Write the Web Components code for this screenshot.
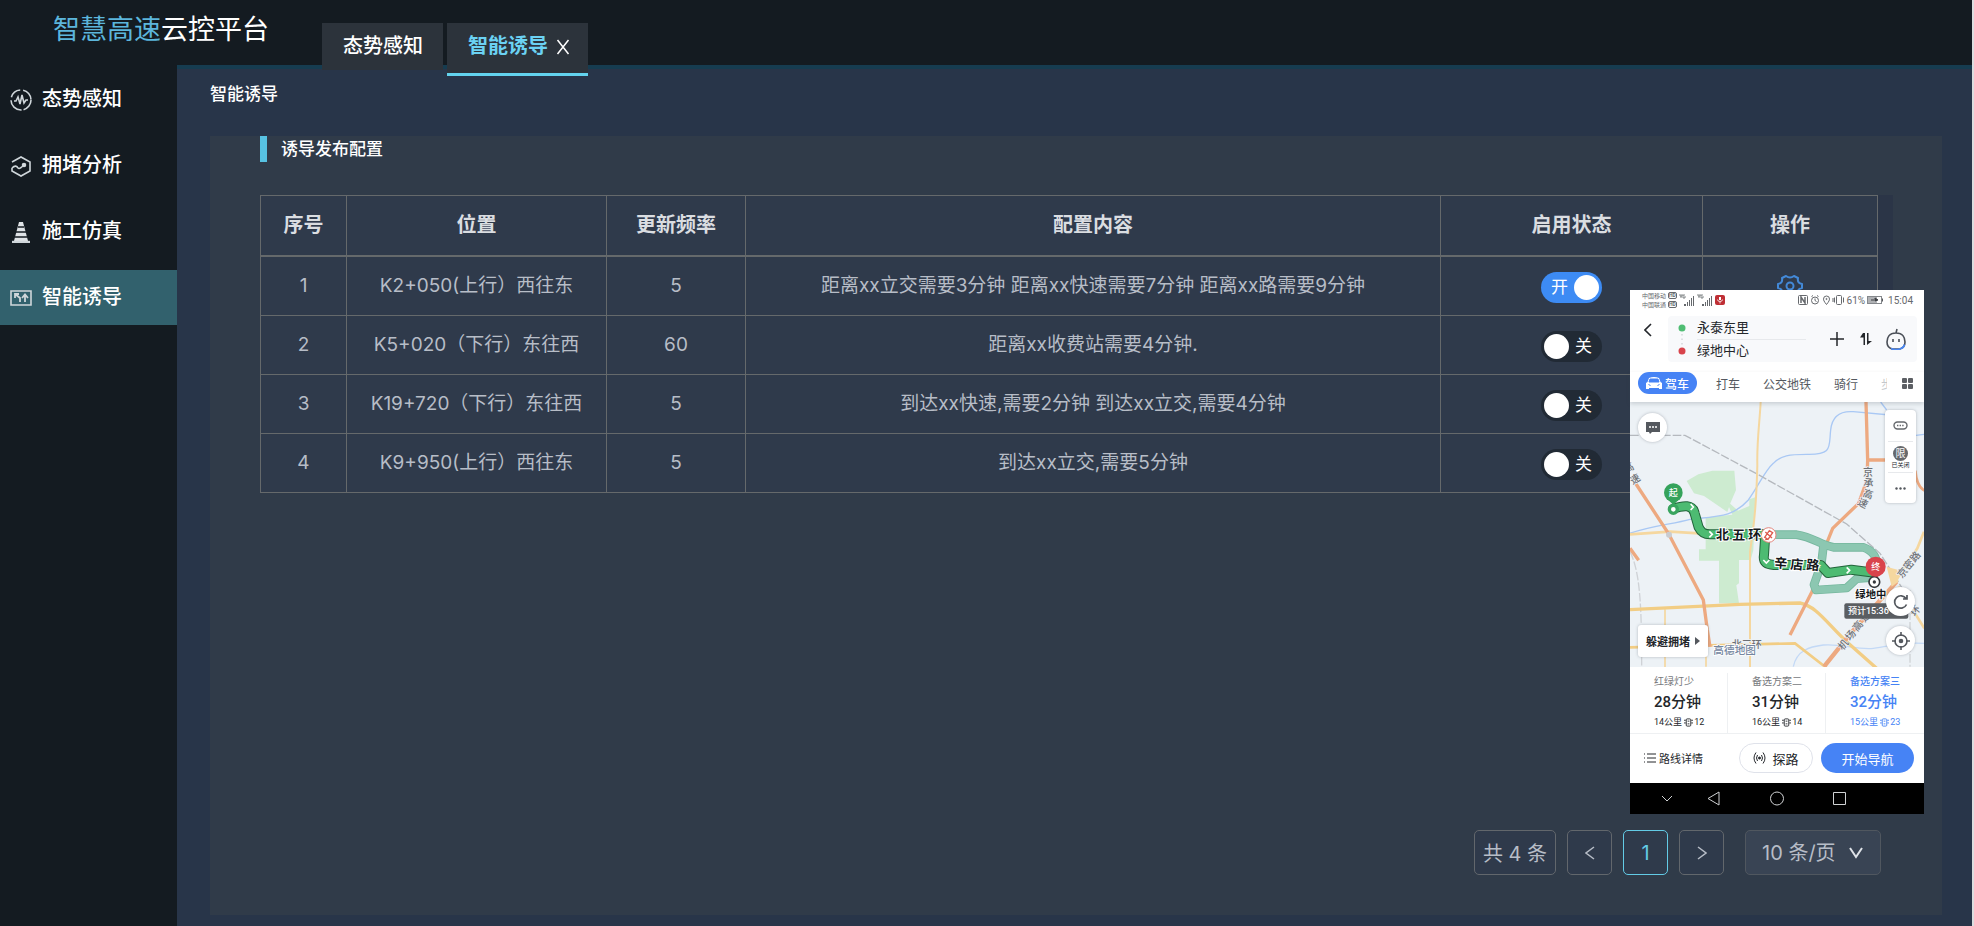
<!DOCTYPE html>
<html lang="zh-CN">
<head>
<meta charset="UTF-8">
<meta name="viewport" content="width=device-width, initial-scale=1">
<title>智慧高速云控平台</title>
<style>
  * {
    box-sizing: border-box;
  }

  body {
    margin: 0;
    background: #283549;
    color: #fff;
    font-family: Inter, "Noto Sans CJK SC", sans-serif;
  }
</style>
</head>
<body>
<cloud-app>
  <app-header slot="header">
    <head-tab>态势感知</head-tab>
    <head-tab active>智能诱导</head-tab>
  </app-header>

  <side-menu slot="menu">
    <side-item icon="pulse">态势感知</side-item>
    <side-item icon="jam">拥堵分析</side-item>
    <side-item icon="cone">施工仿真</side-item>
    <side-item icon="sign" active>智能诱导</side-item>
  </side-menu>

  <content-panel heading="诱导发布配置">
    <guide-table></guide-table>
    <page-bar slot="footer" total="4"></page-bar>
  </content-panel>

  <phone-screen slot="overlay"></phone-screen>
</cloud-app>

<script>
class BaseElement extends HTMLElement {
  constructor() {
    super();
    this.attachShadow({ mode: "open" });
  }

  connectedCallback() {
    this.shadowRoot.innerHTML = `
      <style>
        * { box-sizing: border-box; }
        button, select, input { font: inherit; color: inherit; margin: 0; }
        button { padding: 0; border: 0; background: none; cursor: pointer; }
        a { color: inherit; text-decoration: none; }
        svg { display: block; flex: none; }
      </style>
      ${this.render()}
    `;
  }
}

/* ---------- page shell ---------- */

class CloudApp extends BaseElement {
  render() {
    return `
      <style>
        :host {
          display: flex;
          flex-direction: column;
          min-height: 100vh;
          border-right: 2px solid #dcdddf;
        }
        .body {
          display: flex;
          flex: 1;
        }
        main {
          position: relative;
          display: flex;
          flex-direction: column;
          flex: 1;
          min-width: 0;
          padding: 0 30px 11px 33px;
          border-top: 4px solid #163c50;
          background: #283549;
        }
        h1 {
          margin: 0;
          padding: 13px 0 30px;
          font-size: 17px;
          font-weight: 500;
          line-height: 24px;
        }
        slot[name="overlay"] {
          display: block;
          position: absolute;
          top: 221px;
          right: 48px;
        }
      </style>
      <slot name="header"></slot>
      <div class="body">
        <slot name="menu"></slot>
        <main>
          <h1>智能诱导</h1>
          <slot></slot>
          <slot name="overlay"></slot>
        </main>
      </div>
    `;
  }
}

class AppHeader extends BaseElement {
  render() {
    return `
      <style>
        :host {
          display: flex;
          align-items: flex-start;
          position: relative;
          z-index: 1;
          height: 65px;
          background: #141b21;
        }
        .brand {
          width: 322px;
          padding: 12px 0 0 53px;
          font-size: 27px;
          line-height: 36px;
        }
        .brand b { font-weight: 400; color: #5cb6dc; }
        nav {
          display: flex;
          align-items: flex-start;
          gap: 4px;
          padding-top: 23px;
        }
      </style>
      <div class="brand"><b>智慧高速</b>云控平台</div>
      <nav><slot></slot></nav>
    `;
  }
}

class HeadTab extends BaseElement {
  render() {
    const active = this.hasAttribute("active");
    return `
      <style>
        :host { display: block; }
        .tab {
          display: flex;
          align-items: center;
          gap: 8px;
          padding: 0 20px 0 21px;
          background: #2c333b;
          font-size: 20px;
          font-weight: 500;
          line-height: 47px;
        }
        .tab.active {
          padding-right: 18px;
          padding-bottom: 3px;
          border-bottom: 3px solid #63d3ee;
        }
        .active a { color: #6bd2f3; font-weight: 700; }
      </style>
      <div class="tab ${active ? "active" : ""}">
        <a href="#"><slot></slot></a>
        ${active ? `
        <button aria-label="关闭">
          <svg width="14" height="16" viewBox="0 0 14 16" fill="none" stroke="#fff" stroke-width="1.5">
            <path d="M1.500 1l11 14M12.500 1l-11 14"/>
          </svg>
        </button>` : ""}
      </div>
    `;
  }
}

class SideMenu extends BaseElement {
  render() {
    return `
      <style>
        :host {
          display: flex;
          flex-direction: column;
          flex: none;
          gap: 11px;
          width: 177px;
          padding-top: 7px;
          background: #141b21;
        }
      </style>
      <slot></slot>
    `;
  }
}

const MENU_ICONS = {
  pulse: `
    <circle cx="11" cy="11" r="10" stroke-dasharray="13 2 16 3 12 3" />
    <path d="M4 12h2l2-4 2 7 2-9 2 8 2-3h2"/>`,
  jam: `
    <path d="M2 7l9-5 9 5v9l-9 5-9-5v-3"/>
    <path d="M2 13c3-3 5-2 6 0 2 2 3-2 6-2"/>
    <circle cx="14" cy="10" r="1.5" fill="#dfe3e6"/>`,
  cone: `
    <path d="M9 1h4l5 19H4z" fill="#dfe3e6" stroke="none"/>
    <path d="M8 6h6M6 11h10M5 16h12" stroke="#141b21" stroke-width="1.5"/>
    <path d="M2 21h18" stroke-width="2.4"/>`,
  sign: `
    <path d="M1 4h20v14H1z"/>
    <path d="M10 15V11L5 7M5 11V7h4M15 15V8M12 11l3-3.5 3 3.5" stroke-width="1.8"/>`
};

class SideItem extends BaseElement {
  render() {
    return `
      <style>
        :host { display: block; }
        :host([active]) { background: #32616d; }
        a {
          display: flex;
          align-items: center;
          gap: 10px;
          padding-left: 10px;
          font-size: 20px;
          font-weight: 500;
          line-height: 55px;
        }
      </style>
      <a href="#">
        <svg width="22" height="22" viewBox="0 0 22 22" fill="none" stroke="#cfd6da" stroke-width="1.6">
          ${MENU_ICONS[this.getAttribute("icon")]}
        </svg>
        <slot></slot>
      </a>
    `;
  }
}

/* ---------- content ---------- */

class ContentPanel extends BaseElement {
  render() {
    return `
      <style>
        :host {
          display: flex;
          flex-direction: column;
          justify-content: space-between;
          flex: 1;
          padding: 0 49px 40px 50px;
          background: #303b49;
        }
        h2 {
          margin: 0 0 33px;
          padding-left: 14px;
          border-left: 7px solid #57c2e2;
          font-size: 17px;
          font-weight: 500;
          line-height: 26px;
        }
      </style>
      <section>
        <h2>${this.getAttribute("heading")}</h2>
        <slot></slot>
      </section>
      <slot name="footer"></slot>
    `;
  }
}

const ROWS = [
  ["K2+050(上行）西往东", 5, "距离xx立交需要3分钟 距离xx快速需要7分钟 距离xx路需要9分钟", true],
  ["K5+020（下行）东往西", 60, "距离xx收费站需要4分钟.", false],
  ["K19+720（下行）东往西", 5, "到达xx快速,需要2分钟 到达xx立交,需要4分钟", false],
  ["K9+950(上行）西往东", 5, "到达xx立交,需要5分钟", false]
];

class GuideTable extends BaseElement {
  render() {
    return `
      <style>
        :host {
          display: block;
          padding-right: 15px;
          background: #2b3547;
        }
        table {
          width: 100%;
          table-layout: fixed;
          border-collapse: separate;
          border-spacing: 0;
          border: solid #65696b;
          border-width: 1px 0 0 1px;
          background: #2f3a4b;
        }
        th, td {
          height: 59px;
          padding: 0;
          border: solid #65696b;
          border-width: 0 1px 1px 0;
          text-align: center;
          font-size: 19px;
          line-height: 24px;
          color: #b7bdc7;
        }
        th {
          height: 61px;
          padding-bottom: 2px;
          border-bottom-width: 2px;
          font-size: 20px;
          font-weight: 600;
          color: #dadde1;
        }
        td svg { margin: 5px auto 0; }
      </style>
      <table>
        <colgroup>
          <col style="width: 86px"><col style="width: 260px"><col style="width: 139px">
          <col><col style="width: 262px"><col style="width: 175px">
        </colgroup>
        <thead>
          <tr><th>序号</th><th>位置</th><th>更新频率</th><th>配置内容</th><th>启用状态</th><th>操作</th></tr>
        </thead>
        <tbody>
          ${ROWS.map(([place, rate, text, on], i) => `
          <tr>
            <td>${i + 1}</td>
            <td>${place}</td>
            <td>${rate}</td>
            <td>${text}</td>
            <td><toggle-switch ${on ? "on" : ""}></toggle-switch></td>
            <td>
              <button aria-label="设置">
                <svg width="26" height="24" viewBox="0 0 26 24" fill="none" stroke="#4389d8" stroke-width="2">
                  <path d="M9 2q4 3 8 0l4 2q-1 5 4 6v4q-5 1-4 6l-4 2q-4-3-8 0l-4-2q1-5-4-6v-4q5-1 4-6z" stroke-linejoin="round"/>
                  <circle cx="13" cy="12" r="3.5"/>
                </svg>
              </button>
            </td>
          </tr>`).join("")}
        </tbody>
      </table>
    `;
  }
}

class ToggleSwitch extends BaseElement {
  render() {
    const on = this.hasAttribute("on");
    return `
      <style>
        :host { display: block; }
        label {
          display: grid;
          align-items: center;
          width: 61px;
          margin: 2px auto 0;
          color: #fff;
          font-size: 17px;
          line-height: 31px;
        }
        input, span { grid-area: 1 / 1; }
        input {
          appearance: none;
          display: flex;
          width: 61px;
          height: 31px;
          padding: 3px;
          border-radius: 16px;
          background: #212a35;
        }
        input::before {
          content: "";
          width: 25px;
          height: 25px;
          border-radius: 50%;
          background: #fff;
        }
        input:checked { justify-content: flex-end; background: #3d8bf4; }
        span { padding-left: 34px; text-align: left; pointer-events: none; }
        input:checked + span { padding-left: 10px; }
      </style>
      <label>
        <input type="checkbox" role="switch" ${on ? "checked" : ""}>
        <span>${on ? "开" : "关"}</span>
      </label>
    `;
  }
}

class PageBar extends BaseElement {
  render() {
    return `
      <style>
        :host {
          display: flex;
          justify-content: flex-end;
          gap: 11px;
          padding-right: 12px;
          font-size: 20px;
          color: #b7bdc7;
        }
        .total, button, .size {
          display: grid;
          place-items: center;
          height: 45px;
          border: 1px solid #62676c;
          border-radius: 5px;
          background: #2f3a4b;
        }
        .total { width: 82px; }
        button { width: 45px; }
        button.current { border-color: #63cbe6; color: #63cbe6; }
        .size {
          width: 136px;
          margin-left: 10px;
          border-color: #50575f;
          background: #394454;
        }
        select, .size svg { grid-area: 1 / 1; }
        select {
          appearance: none;
          width: 100%;
          height: 100%;
          padding: 0 0 0 16px;
          border: 0;
          background: none;
        }
        .size svg {
          justify-self: end;
          margin-right: 17px;
          pointer-events: none;
        }
      </style>
      <div class="total">共 ${this.getAttribute("total")} 条</div>
      <button aria-label="上一页">
        <svg width="10" height="14" viewBox="0 0 10 14" fill="none" stroke="currentColor" stroke-width="1.5"><path d="M9 1L1 7l8 6"/></svg>
      </button>
      <button class="current">1</button>
      <button aria-label="下一页">
        <svg width="10" height="14" viewBox="0 0 10 14" fill="none" stroke="currentColor" stroke-width="1.5"><path d="M1 1l8 6-8 6"/></svg>
      </button>
      <div class="size">
        <select aria-label="每页条数"><option>10 条/页</option></select>
        <svg width="14" height="12" viewBox="0 0 14 12" fill="none" stroke="#dfe3e8" stroke-width="2"><path d="M1 1l6 9 6-9"/></svg>
      </div>
    `;
  }
}

/* ---------- phone navigation screen ---------- */

class PhoneScreen extends BaseElement {
  render() {
    return `
      <style>
        :host {
          display: flex;
          flex-direction: column;
          width: 294px;
          background: #fff;
          color: #24272b;
          font-family: Roboto, "Noto Sans CJK SC", sans-serif;
        }
      </style>
      <phone-status></phone-status>
      <route-search></route-search>
      <travel-modes></travel-modes>
      <route-map></route-map>
      <route-plans></route-plans>
      <route-actions></route-actions>
      <phone-keys></phone-keys>
    `;
  }
}

class PhoneStatus extends BaseElement {
  render() {
    const bars = `
      <svg width="16" height="12" viewBox="0 0 16 12" fill="#66696d">
        <path d="M5 10h2v2H5zM8 8h1v4H8zM10 6h1v6h-1zM12 4h1v8h-1zM14 2h1v10h-1z"/>
        <path d="M1 0v2h2V0M2 2v2M6 1H4v3h2V2" fill="none" stroke="#66696d" stroke-width=".8"/>
      </svg>`;
    return `
      <style>
        :host {
          display: flex;
          justify-content: space-between;
          height: 22px;
          padding: 0 11px 2px 12px;
          color: #66696d;
        }
        .side { display: flex; align-items: center; gap: 2px; }
        .carrier { font-size: 6px; line-height: 9px; }
        .carrier div { display: flex; align-items: center; gap: 2px; }
        .carrier b {
          border: 1px solid #66696d;
          border-radius: 2px;
          font-size: 5px;
          line-height: 5px;
        }
        .battery, .time { font-size: 10px; }
        .time { margin-left: 2px; }
      </style>
      <div class="side">
        <div class="carrier">
          <div>中国移动<b>HD</b></div>
          <div>中国联通<b>HD</b></div>
        </div>
        ${bars}${bars}
        <svg width="10" height="10" viewBox="0 0 10 10">
          <rect width="10" height="10" rx="2" fill="#bf2f35"/>
          <path d="M4 2h2v3H4z" fill="#fff"/>
          <path d="M2.500 4.500q0 2 2.500 2t2.500-2M5 6.500v2" stroke="#fff" stroke-width=".8" fill="none"/>
        </svg>
      </div>
      <div class="side">
        <svg width="47" height="10" viewBox="0 0 47 10" fill="none" stroke="#66696d">
          <rect x=".5" y=".5" width="9" height="9" rx="1"/>
          <path d="M3 8V2l4 6V2" stroke-width="1.500"/>
          <circle cx="17" cy="5.500" r="3.500"/>
          <path d="M17 3.500v2l1.500 1M13.500 1.500L15 .5M19 .5l1.500 1"/>
          <path d="M28.500 9.500C26 6.500 25.500 5 25.500 4a3 3 0 016 0c0 1-.5 2.500-3 5.500z"/>
          <circle cx="28.500" cy="4" r=".6"/>
          <rect x="38.500" y=".5" width="5" height="9" rx="1"/>
          <path d="M36.500 2.500v5M35 3v4M45.500 2.500v5"/>
        </svg>
        <span class="battery">61%</span>
        <svg width="17" height="8" viewBox="0 0 17 8">
          <rect x=".5" y=".5" width="14" height="7" fill="#fff" stroke="#85888c"/>
          <path d="M1 1h9v6H1z" fill="#b0b2b5"/>
          <path d="M4 4h3M8 2v3l3-1z" stroke="#3c3f43" fill="#3c3f43"/>
          <path d="M15.500 2.500v3" stroke="#55585c"/>
        </svg>
        <span class="time">15:04</span>
      </div>
    `;
  }
}

class RouteSearch extends BaseElement {
  render() {
    return `
      <style>
        :host {
          display: flex;
          align-items: flex-start;
          gap: 16px;
          padding: 4px 7px 10px 14px;
        }
        .back { padding-top: 7px; }
        .card {
          display: flex;
          align-items: center;
          flex: 1;
          height: 46px;
          padding: 0 11px 0 10px;
          border-radius: 4px;
          background: #f8f9fb;
        }
        .stops { flex: 1; margin: 0 24px 0 11px; font-size: 13px; line-height: 22px; }
        .stops div + div { border-top: 1px solid #e7e9ec; }
        .tools { display: flex; align-items: center; gap: 14px; }
      </style>
      <button class="back" aria-label="返回">
        <svg width="8" height="14" viewBox="0 0 8 14" fill="none" stroke="#24272b" stroke-width="1.600"><path d="M7 1L1 7l6 6"/></svg>
      </button>
      <div class="card">
        <svg width="8" height="31" viewBox="0 0 8 31">
          <circle cx="4" cy="4" r="3.500" fill="#4fbd73"/>
          <path d="M4 10v12" stroke="#c3c6ca" stroke-dasharray="1.500 3"/>
          <circle cx="4" cy="27" r="3.500" fill="#d8444c"/>
        </svg>
        <div class="stops"><div>永泰东里</div><div>绿地中心</div></div>
        <div class="tools">
          <svg width="14" height="14" viewBox="0 0 14 14" stroke="#24272b" stroke-width="1.500"><path d="M7 0v14M0 7h14"/></svg>
          <svg width="14" height="14" viewBox="-2 0 14 14" fill="#24272b">
            <path d="M3 1h2v12H3.500V5.500H0zM7 1h1.500v8H12l-5 4z"/>
          </svg>
          <svg width="20" height="22" viewBox="0 0 20 22" fill="none" stroke="#4a4f57" stroke-width="1.600">
            <path d="M10 5C3 5 1 10 1 14c0 4 2 6 5 7h8c3-1 5-3 5-7 0-4-2-9-9-9zM10 5l1-4"/>
            <path d="M5 20.500q5 2 10 0 3-1 3.500-4" stroke="#4a86f0"/>
            <path d="M7 11v3M13 11v3"/>
          </svg>
        </div>
      </div>
    `;
  }
}

class TravelModes extends BaseElement {
  render() {
    return `
      <style>
        :host {
          display: flex;
          align-items: center;
          gap: 23px;
          position: relative;
          z-index: 1;
          height: 30px;
          padding: 0 11px 8px 8px;
          box-shadow: 0 2px 4px rgba(60, 70, 80, .2);
          background: #fff;
          color: #54585e;
          font-size: 12px;
        }
        button { flex: none; }
        .drive {
          display: flex;
          align-items: center;
          gap: 3px;
          height: 22px;
          margin-right: -4px;
          padding: 0 8px;
          border-radius: 11px;
          background: #4683f5;
          color: #fff;
          font-weight: 500;
        }
        .walk {
          width: 6px;
          overflow: hidden;
          color: #c5c8cc;
        }
        .all { margin-left: -8px; }
      </style>
      <button class="drive">
        <svg width="16" height="13" viewBox="0 0 16 13">
          <path d="M3 1q5-2 10 0l1.500 4 1.500 1v6h-3v-1H3v1H0V6l1.500-1z" fill="#fff"/>
          <path d="M4 2h8l1 3H3zM2.500 7.500l2 1M13.500 7.500l-2 1" fill="#4683f5" stroke="#4683f5"/>
        </svg>
        驾车
      </button>
      <button>打车</button>
      <button>公交地铁</button>
      <button>骑行</button>
      <button class="walk">步</button>
      <button class="all" aria-label="全部">
        <svg width="11" height="11" viewBox="0 0 11 11" fill="#5c5f64">
          <rect width="5" height="5" rx="1"/><rect x="6" width="5" height="5" rx="1"/>
          <rect y="6" width="5" height="5" rx="1"/><rect x="6" y="6" width="5" height="5" rx="1"/>
        </svg>
      </button>
    `;
  }
}

class RouteMap extends BaseElement {
  render() {
    return `
      <style>
        :host {
          display: grid;
          height: 265px;
          overflow: hidden;
        }
        .map, .controls { grid-area: 1 / 1; }
        .map { width: 100%; height: 265px; background: #edf2f6; }
        .controls {
          display: flex;
          justify-content: space-between;
          z-index: 1;
          padding: 8px 8px 0;
        }
        .left, .right { display: flex; flex-direction: column; align-items: flex-start; }
        .left { justify-content: space-between; padding: 3px 0 10px; }
        .right { align-items: center; }
        .round, .avoid, .layers {
          display: grid;
          place-content: center;
          align-items: center;
          background: #fff;
          box-shadow: 0 0 3px rgba(60, 70, 80, .35);
        }
        .round { width: 29px; height: 29px; border-radius: 50%; }
        .avoid {
          grid-auto-flow: column;
          gap: 5px;
          width: 70px;
          height: 32px;
          border-radius: 3px;
          font-size: 11px;
          font-weight: 700;
        }
        .layers {
          width: 31px;
          margin-bottom: 84px;
          border-radius: 4px;
          font-size: 6px;
          line-height: 8px;
        }
        .layers > * { width: 25px; height: 31px; display: grid; place-content: center; justify-items: center; }
        .layers > * + * { border-top: 1px solid #e7e9ec; }
        .limit {
          width: 15px;
          border-radius: 50%;
          background: #66696d;
          color: #fff;
          font-size: 10px;
          line-height: 15px;
        }
        .locate { margin-top: 10px; }
      </style>
      <svg class="map" viewBox="30 6 882 795" preserveAspectRatio="xMidYMid slice" fill="none" font-weight="500">
        <g fill="#cdebd0">
          <path d="M200 243l35-20 42-11h66l5 58-18 42-8 24-70-48-30-8z"/>
          <path d="M318 300l36 32 34-14 0-20 18-6-6 158-8 30h-35v70l-8 6 8 54h-60V482h-60v-34h20V352l80-8z"/>
        </g>
        <g stroke="#a9c8f4" stroke-width="4">
          <path d="M30 400c60-22 130-28 180-42 90-10 130-8 175-58 35-50 50-88 75-110 22-24 50-27 100-27 80 2 66-23 72-73 4-40 28-58 68-55l110 10"/>
          <path d="M782 6l18 24M888 106l24-3"/>
          <path d="M520 800c10-50 50-60 90-65 50-5 100 15 150 10s80-20 152-15" stroke="#c3d9f6"/>
        </g>
        <g stroke="#b5b9be" stroke-width="4" stroke-dasharray="26 6">
          <path d="M30 106h165l220 118 265 148 100 88 70 110"/>
          <path d="M30 455c30 60 35 160 35 345M870 570v230" stroke="#cfd2d6"/>
        </g>
        <g stroke="#f5d79f" stroke-width="8">
          <path d="M422 6c-3 60-12 120-10 190-2 80-5 140-14 200l-8 60v345" stroke-width="6"/>
          <path d="M30 403l120-8 100 6"/>
          <path d="M135 628v175M258 720v80" stroke-width="5"/>
          <path d="M30 742l495-12 95 74" stroke="#f2cd84"/>
          <path d="M30 629l330-16 180-4c50 10 80 60 140 116l90 80" stroke="#f2cd84" stroke-width="10"/>
          <path d="M912 395l-20 50-60 90M835 560l78 125"/>
        </g>
        <g stroke="#eda980" stroke-width="10">
          <path d="M48 252l97 148 105 200 12 90 8 50M30 445l26 36"/>
          <path d="M738 6l5 174h54M743 180l-2 60-25 70-78 75-20 50-42 140-66 130"/>
          <path d="M612 800l80-100 138-155" stroke-width="13"/>
          <path d="M886 212q4 48 28 60" stroke-width="8"/>
        </g>
        <path d="M800 500l35 10v35l-20 15z" fill="#f5d79f"/>
        <circle cx="147" cy="404" r="9" fill="#c9ccd0"/>

        <g stroke-linejoin="round" stroke-linecap="round">
          <path d="M460 404h70c50 8 70 30 110 38h90c30 10 40 30 44 60M610 442l-6 50-22 62 6 16 92-6 30-28 50-4" stroke="#76b79e" stroke-width="26"/>
          <path d="M460 404h70c50 8 70 30 110 38h90c30 10 40 30 44 60M610 442l-6 50-22 62 6 16 92-6 30-28 50-4" stroke="#8cc7b1" stroke-width="21"/>
          <path d="M160 326c30-10 58-14 64 14l12 42c8 16 16 21 34 21h166l-4 62c-4 24 10 28 30 30h140l22 24 70-10 70 9" stroke="#23643b" stroke-width="30"/>
          <path d="M160 326c30-10 58-14 64 14l12 42c8 16 16 21 34 21h166l-4 62c-4 24 10 28 30 30h140l22 24 70-10 70 9" stroke="#4dbb72" stroke-width="24"/>
        </g>
        <path d="M212 312l8 9-8 9M268 394l9 9-9 9M430 480l9 9 9-9M680 502l9 9-9 9" stroke="#fff" stroke-width="5"/>

        <circle cx="160" cy="328" r="12" fill="#fff" stroke="#39a55f" stroke-width="10"/>
        <path d="M140 295l20 20 20-20z" fill="#35a35b"/>
        <circle cx="160" cy="278" r="28" fill="#35a35b"/>
        <circle cx="446" cy="405" r="22" fill="#fff" stroke="#e3867d" stroke-width="3"/>
        <path d="M434 412l14-20 10 6-14 20zM436 396l20 18M442 416l-6 4" stroke="#dd5a4c" stroke-width="4"/>
        <path d="M750 520l16 20 16-20z" fill="#d9444c"/>
        <circle cx="763" cy="546" r="16" fill="#fff" stroke="#34373b" stroke-width="5"/>
        <circle cx="763" cy="546" r="5" fill="#34373b"/>
        <circle cx="767" cy="500" r="30" fill="#d9444c"/>
        <g fill="#fff" font-size="27" text-anchor="middle">
          <text x="160" y="288">起</text>
          <text x="767" y="510">终</text>
        </g>

        <g fill="#6d7075" font-size="30" stroke="#edf2f6" stroke-width="4" paint-order="stroke">
          <text x="729 730 727 710" y="228 258 288 312" rotate="0 4 18 28">京承高速</text>
          <text x="18 38" y="220 254" rotate="-28 -32">高速</text>
          <text x="846 865 884" y="536 512 488" rotate="-50">京密路</text>
          <text x="668 690 712 734" y="752 724 696 668" rotate="-50">机场高速</text>
          <text x="884" y="650" rotate="-50">环</text>
          <text x="335" y="744">北三环</text>
        </g>
        <text x="280" y="763" font-size="32" fill="#7486a0" stroke="#fff" stroke-width="5" paint-order="stroke">高德地图</text>
        <g fill="#15181b" stroke="#fff" stroke-width="6" paint-order="stroke" font-weight="700">
          <text x="288 337 385" y="418" font-size="39">北五环</text>
          <text x="462 510 558" y="502 506 508" font-size="39" rotate="4">辛店路</text>
          <text x="706" y="593" font-size="31">绿地中</text>
        </g>
        <rect x="673" y="610" width="192" height="46" rx="6" fill="#5a5e62"/>
        <text x="684" y="643" font-size="27" fill="#fff">预计15:36</text>
      </svg>
      <div class="controls">
        <div class="left">
          <button class="round" aria-label="消息">
            <svg width="16" height="14" viewBox="0 0 16 14"><path d="M1 1h14v10H7l-2 2-1-2H1z" fill="#54585e"/><path d="M4 6h2M7 6h2M10 6h2" stroke="#fff" stroke-width="1.500"/></svg>
          </button>
          <button class="avoid">
            <span>躲避拥堵</span>
            <svg width="5" height="8" viewBox="0 0 5 8"><path d="M0 0l5 4-5 4z" fill="#54585e"/></svg>
          </button>
        </div>
        <div class="right">
          <div class="layers">
            <button aria-label="路况">
              <svg width="15" height="9" viewBox="0 0 15 9" fill="none" stroke="#66696d" stroke-width="1.400"><rect x="1" y="1" width="13" height="7" rx="3.500"/><path d="M4 4.500h7" stroke-dasharray="1.400 1.200"/></svg>
            </button>
            <button><span class="limit">限</span><span>已关闭</span></button>
            <button aria-label="更多">
              <svg width="11" height="3" viewBox="0 0 11 3" fill="#54585e"><circle cx="1.500" cy="1.500" r="1.200"/><circle cx="5.500" cy="1.500" r="1.200"/><circle cx="9.500" cy="1.500" r="1.200"/></svg>
            </button>
          </div>
          <button class="round" aria-label="刷新">
            <svg width="16" height="16" viewBox="0 0 16 16" fill="none" stroke="#54585e" stroke-width="1.700"><path d="M13.500 10.500a6.200 6.200 0 11-.5-6M14 1v4h-4"/></svg>
          </button>
          <button class="round locate" aria-label="定位">
            <svg width="18" height="18" viewBox="0 0 18 18" fill="none" stroke="#54585e" stroke-width="1.600"><circle cx="9" cy="9" r="6"/><path d="M9 0v4M9 14v4M0 9h4M14 9h4"/><circle cx="9" cy="9" r="1.500" fill="#54585e"/></svg>
          </button>
        </div>
      </div>
    `;
  }
}

const PLANS = [
  ["红绿灯少", 28, 14, 12],
  ["备选方案二", 31, 16, 14],
  ["备选方案三", 32, 15, 23]
];

class RoutePlans extends BaseElement {
  render() {
    return `
      <style>
        :host {
          display: grid;
          grid-template-columns: repeat(3, 1fr);
          padding-top: 6px;
          border-bottom: 1px solid #eef0f2;
        }
        .plan {
          padding: 0 0 2px 24px;
          border-right: 1px solid #eef0f2;
          font-size: 9px;
          line-height: 18px;
        }
        .plan:last-child { border-right: 0; }
        .name { font-size: 10px; color: #77797d; }
        .time { font-size: 15px; font-weight: 500; line-height: 22px; }
        .info { display: flex; align-items: center; gap: 1px; }
        .info svg { margin-left: 1px; }
        .picked, .picked .name { color: #4683f5; }
        .picked .name { font-weight: 500; }
      </style>
      ${PLANS.map(([name, time, km, lights], i) => `
      <div class="plan ${i === 2 ? "picked" : ""}">
        <div class="name">${name}</div>
        <div class="time">${time}分钟</div>
        <div class="info">${km}公里
          <svg width="9" height="9" viewBox="0 0 10 9" fill="none" stroke="currentColor"><rect x="2.500" y=".5" width="5" height="8" rx="1"/><path d="M0 2h2M0 5h2M8 2h2M8 5h2M4 3h2M4 6h2"/></svg>
          ${lights}
        </div>
      </div>`).join("")}
    `;
  }
}

class RouteActions extends BaseElement {
  render() {
    return `
      <style>
        :host {
          display: flex;
          align-items: center;
          justify-content: space-between;
          padding: 9px 10px 10px 14px;
        }
        button, .pair {
          display: flex;
          align-items: center;
          justify-content: center;
        }
        .detail { gap: 3px; font-size: 11px; }
        .pair { gap: 8px; font-size: 13px; }
        .scout {
          gap: 6px;
          width: 74px;
          height: 30px;
          border: 1px solid #dfe2ea;
          border-radius: 15px;
        }
        .start {
          width: 93px;
          height: 30px;
          border-radius: 15px;
          background: #4683f5;
          color: #fff;
        }
      </style>
      <button class="detail">
        <svg width="12" height="10" viewBox="0 0 12 10" stroke="#24272b"><path d="M0 1h1M3 1h9M0 5h1M3 5h9M0 9h1M3 9h9"/></svg>
        路线详情
      </button>
      <div class="pair">
        <button class="scout">
          <svg width="13" height="12" viewBox="0 0 13 12" fill="none" stroke="#24272b"><circle cx="6.500" cy="6" r="1" fill="#24272b"/><path d="M4.500 3q-2 3 0 6M8.500 3q2 3 0 6M3 .5q-4 5.500 0 11M10 .5q4 5.500 0 11"/></svg>
          探路
        </button>
        <button class="start">开始导航</button>
      </div>
    `;
  }
}

class PhoneKeys extends BaseElement {
  render() {
    return `
      <style>
        :host { display: block; background: #000; }
        svg { width: 100%; height: 31px; }
      </style>
      <svg viewBox="0 0 294 31" fill="none" stroke="#d0d2d4">
        <path d="M32 13l5 5 5-5M89 9v13l-11-6.500zM203.500 9.500h12v12h-12z"/>
        <circle cx="147" cy="15.500" r="6.500"/>
      </svg>
    `;
  }
}

customElements.define("cloud-app", CloudApp);
customElements.define("app-header", AppHeader);
customElements.define("head-tab", HeadTab);
customElements.define("side-menu", SideMenu);
customElements.define("side-item", SideItem);
customElements.define("content-panel", ContentPanel);
customElements.define("guide-table", GuideTable);
customElements.define("toggle-switch", ToggleSwitch);
customElements.define("page-bar", PageBar);
customElements.define("phone-screen", PhoneScreen);
customElements.define("phone-status", PhoneStatus);
customElements.define("route-search", RouteSearch);
customElements.define("travel-modes", TravelModes);
customElements.define("route-map", RouteMap);
customElements.define("route-plans", RoutePlans);
customElements.define("route-actions", RouteActions);
customElements.define("phone-keys", PhoneKeys);
</script>
</body>
</html>
